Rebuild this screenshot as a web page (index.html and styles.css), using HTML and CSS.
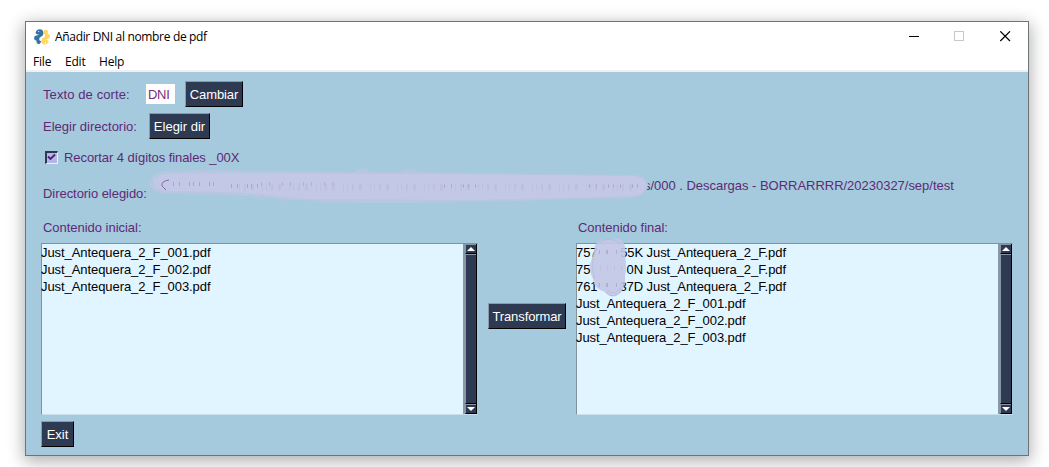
FILE: index.html
```html
<!DOCTYPE html>
<html lang="es">
<head>
<meta charset="utf-8">
<title>Añadir DNI al nombre de pdf</title>
<link rel="stylesheet" href="styles.css">
</head>
<body>
<main class="window">
  <header class="titlebar">
    <svg class="logo" width="16" height="16" viewBox="0 0 16 16">
      <path fill="#3673a5" d="M2.6 1.600Q4.800-.3 7.500.6Q9.800 1.500 9.400 4.700Q9 7 7 7.800Q5 8.600 5.200 10.200Q5.500 12 7.200 12.300Q6.600 15.800 4 15Q2 14 2.600 11.800Q.2 11.500 0 9.200Q0 6.800 2.500 6.600L5.500 5.700Q1.500 5.800 1.600 3.500Z"/>
      <path fill="#ffd75e" d="M9.900 1.200Q12.900-.2 14 2.300L13.600 4.700Q15.800 5 16 7.500Q15.700 9.800 13.300 10.100Q12 10.300 13 11Q15 11.600 14.400 13.600Q12.800 16 9.500 15.500Q7 14.800 7.300 11.600Q7.500 9.200 10 8.300Q11.800 7.300 10.600 5.200Q9.100 4 9.900 1.200Z"/>
      <circle cx="4.700" cy="2.500" r=".55" fill="#fff"/>
      <circle cx="11.500" cy="13.600" r=".55" fill="#fff"/>
    </svg>
    <span class="title">Añadir DNI al nombre de pdf</span>
    <svg class="controls" width="102" height="12" viewBox="0 0 102 12" fill="none" shape-rendering="crispEdges">
      <path d="M0 5.500H10" stroke="#000"/>
      <rect x="45.500" y="0.500" width="9" height="9" stroke="#c8c8c8"/>
      <path d="M91.300 .3L101 10M101 .3L91.300 10" stroke="#000" stroke-width="1.200" shape-rendering="auto"/>
    </svg>
  </header>
  <nav class="menu"><span class="file">File</span><span class="edit">Edit</span><span>Help</span></nav>
  <section class="body">
    <div class="row cut"><label class="cut-label">Texto de corte:</label><span class="input">DNI</span><button class="cambiar">Cambiar</button></div>
    <div class="row choose"><label class="dir-label">Elegir directorio:</label><button class="elegir">Elegir dir</button></div>
    <div class="row check">
      <span class="box"><svg width="9" height="9" viewBox="0 0 9 9"><path d="M1 3.500L3.500 6L8 1.500" fill="none" stroke="#4c226c" stroke-width="1.800"/></svg></span>
      <label class="check-label">Recortar 4 dígitos finales _00X</label>
    </div>
    <div class="row chosen">
      <label class="chosen-label">Directorio elegido:</label><span class="path">s/000 . Descargas - BORRARRRR/20230327/sep/test</span>
      <svg class="smear" width="510" height="40" viewBox="0 0 510 40">
        <path fill="#b7c6e1" d="M0 17Q1 7 16 4L60 3L205 5Q214-1 221 5L250 5Q260 0 269 5L320 6L485 8Q498 8 499 18Q498 28 485 31L330 35L235 36L140 33L85 28L16 27Q1 25 0 17Z"/>
        <path fill="#c3c8e6" d="M4 17Q5 8 18 7L80 6L270 7L486 9Q496 11 497 19Q495 28 484 29L325 33L160 32L80 25L18 24Q6 24 4 17Z"/>
        <g fill="none" stroke="#b8c8e2"><path d="M7 7Q0 16 10 25M12 6Q4 15 13 25M73 26L97 32M89 25L115 33M107 26L138 34M206 5Q213-1 220 5M256 5Q263 0 271 6M170 35L270 35"/></g>
        <path d="M20 13Q12 14 13 19L17 23" fill="none" stroke="#775791" opacity=".8"/>
        <path d="M24 17h44M82 19h30" stroke="#8d7da9" stroke-width="4" stroke-dasharray="1 5 1 9 1 3" opacity=".45"/>
        <path d="M112 17h75" stroke="#8d7da9" stroke-width="4" stroke-dasharray="1 7 1 12" opacity=".3"/>
        <path d="M295 19h40M440 19h55" stroke="#8d7da9" stroke-width="3" stroke-dasharray="1 6 1 11 1 4" opacity=".5"/>
        <path d="M90 20h400" stroke="#b5b4d5" stroke-width="7" stroke-dasharray="1 4 2 5 3 8 1 3" opacity=".35"/>
      </svg>
    </div>
    <div class="lists">
      <div class="column">
        <label class="start-label">Contenido inicial:</label>
        <div class="listbox">
          <div class="items"><span>Just_Antequera_2_F_001.pdf</span><span>Just_Antequera_2_F_002.pdf</span><span>Just_Antequera_2_F_003.pdf</span></div>
          <div class="scroll"><i class="up"></i><i class="thumb"></i><i class="down"></i></div>
        </div>
      </div>
      <button class="transform">Transformar</button>
      <div class="column">
        <label class="end-label">Contenido final:</label>
        <div class="listbox">
          <div class="items">
            <span class="id"><b>757</b><em>55K Just_Antequera_2_F.pdf</em></span>
            <span class="id"><b>75</b><em>0N Just_Antequera_2_F.pdf</em></span>
            <span class="id"><b>761</b><em>37D Just_Antequera_2_F.pdf</em></span>
            <span>Just_Antequera_2_F_001.pdf</span><span>Just_Antequera_2_F_002.pdf</span><span>Just_Antequera_2_F_003.pdf</span>
          </div>
          <div class="scroll"><i class="up"></i><i class="thumb"></i><i class="down"></i></div>
          <svg class="blot" width="42" height="64" viewBox="0 0 42 64">
            <path fill="#c3c8e6" fill-opacity=".9" d="M5 8Q10 1 18 3Q26-1 32 4Q37 9 35 19Q37 30 35 39Q36 52 29 57Q22 63 15 55Q4 52 3 42Q-1 34 0 27Q3 19 4 15Z"/>
            <path fill="none" stroke="#aebbd9" stroke-opacity=".7" d="M7 7Q18-2 31 6M5 13Q0 28 5 42M15 55Q24 64 33 52M17 53Q25 60 31 50"/>
            <path d="M9 15h24M9 48h25" stroke="#7e819d" stroke-width="4" stroke-dasharray="1 6 2 8" opacity=".35"/>
            <path d="M10 31h24" stroke="#9698b8" stroke-width="5" stroke-dasharray="1 6" opacity=".2"/>
          </svg>
        </div>
      </div>
    </div>
    <button class="exit">Exit</button>
  </section>
</main>
</body>
</html>
```

FILE: styles.css
```css
* { box-sizing: border-box; }
body { margin: 0; padding: 21px 0 0 25px; height: 467px; overflow: hidden; background: #fff; font: 13px/17px "Liberation Sans", Arial, sans-serif; }
.window { width: 1004px; height: 435px; border: 1px solid #6d7478; background: #fff; box-shadow: 0 4px 16px 1px #0005; display: flex; flex-direction: column; }
.titlebar { height: 30px; display: flex; align-items: center; padding: 0 17px 0 8px; font: 12px/18px "Open Sans", sans-serif; color: #000; }
.title { margin-left: 5px; letter-spacing: -.33px; white-space: nowrap; }
.logo { flex: none; }
.controls { margin-left: auto; }
.menu { height: 20px; border-bottom: 2px solid #f0f0f0; padding-left: 7px; display: flex; font: 12px/19px "Open Sans", sans-serif; letter-spacing: -.2px; }
.file { width: 32px; }
.edit { width: 34px; }
.body { flex: 1; background: #a5c9dd; padding: 9px 15px 0; color: #602974; display: flex; flex-direction: column; align-items: flex-start; }
.row { display: flex; align-items: center; padding-left: 2px; white-space: nowrap; }
button { font: 13px/15px "Liberation Sans", Arial, sans-serif; height: 26px; padding: 0; color: #fff; background: #2e3952; border: 1px solid; border-color: #8f9aa8 #000 #000 #8f9aa8; white-space: nowrap; }
.cut { height: 26px; }
.cut-label { width: 103px; letter-spacing: .1px; }
.input { width: 29px; height: 20px; background: #fff; padding: 3px 2px 1px; line-height: 16px; color: #7b2b7b; letter-spacing: -.3px; }
.cambiar { width: 58px; margin-left: 10px; letter-spacing: -.1px; }
.choose { height: 26px; margin-top: 6px; }
.dir-label { width: 106px; }
.elegir { width: 61px; }
.check { margin-top: 9px; height: 19px; padding-left: 4px; }
.box { width: 13px; height: 13px; background: #b5b5e7; border: 2px solid; border-color: #30394f #e5f4fb #e5f4fb #30394f; border-right-width: 1px; border-bottom-width: 1px; display: flex; }
.check-label { margin-left: 6px; letter-spacing: -.08px; }
.chosen { position: relative; width: 972px; height: 39px; align-items: flex-start; margin-top: 10px; }
.chosen-label { margin-top: 8px; width: 601px; letter-spacing: -.05px; }
.path { letter-spacing: -.02px; }
.smear { position: absolute; left: 108px; top: -10px; }
.lists { display: flex; align-items: flex-end; height: 199px; }
.column { display: flex; flex-direction: column; width: 437px; height: 199px; justify-content: flex-end; }
.column label { padding-left: 2px; height: 17px; margin-bottom: 7px; letter-spacing: -.03px; }
.listbox { position: relative; display: flex; width: 437px; height: 172px; border: 1px solid; border-color: #7f929e #a5c9dd #c7e0eb #7f929e; background: #e0f5ff; }
.items { flex: 1; color: #000; display: flex; flex-direction: column; white-space: nowrap; letter-spacing: -.07px; margin-left: -1px; }
.id { display: flex; justify-content: space-between; width: 210px; }
.id b { font-weight: 400; }
.id em { font-style: normal; }
.scroll { width: 14px; background: #2e3952; border-left: 2px solid #8799a6; border-right: 1px solid #000; display: flex; flex-direction: column; }
.scroll i { display: flex; justify-content: center; align-items: center; border-top: 1px solid #8895a5; border-left: 1px solid #8895a5; border-bottom: 1px solid #000; height: 10px; }
.scroll .thumb { flex: 1; }
.up::after, .down::after { content: ""; border: 4px solid transparent; border-top: 0; border-bottom: 4px solid #fff; }
.down::after { border-top: 4px solid #fff; border-bottom: 0; }
.blot { position: absolute; left: 13px; top: -7px; }
.transform { width: 78px; margin: 0 10px 86px; letter-spacing: -.1px; }
.exit { width: 33px; margin-top: 6px; }
```
